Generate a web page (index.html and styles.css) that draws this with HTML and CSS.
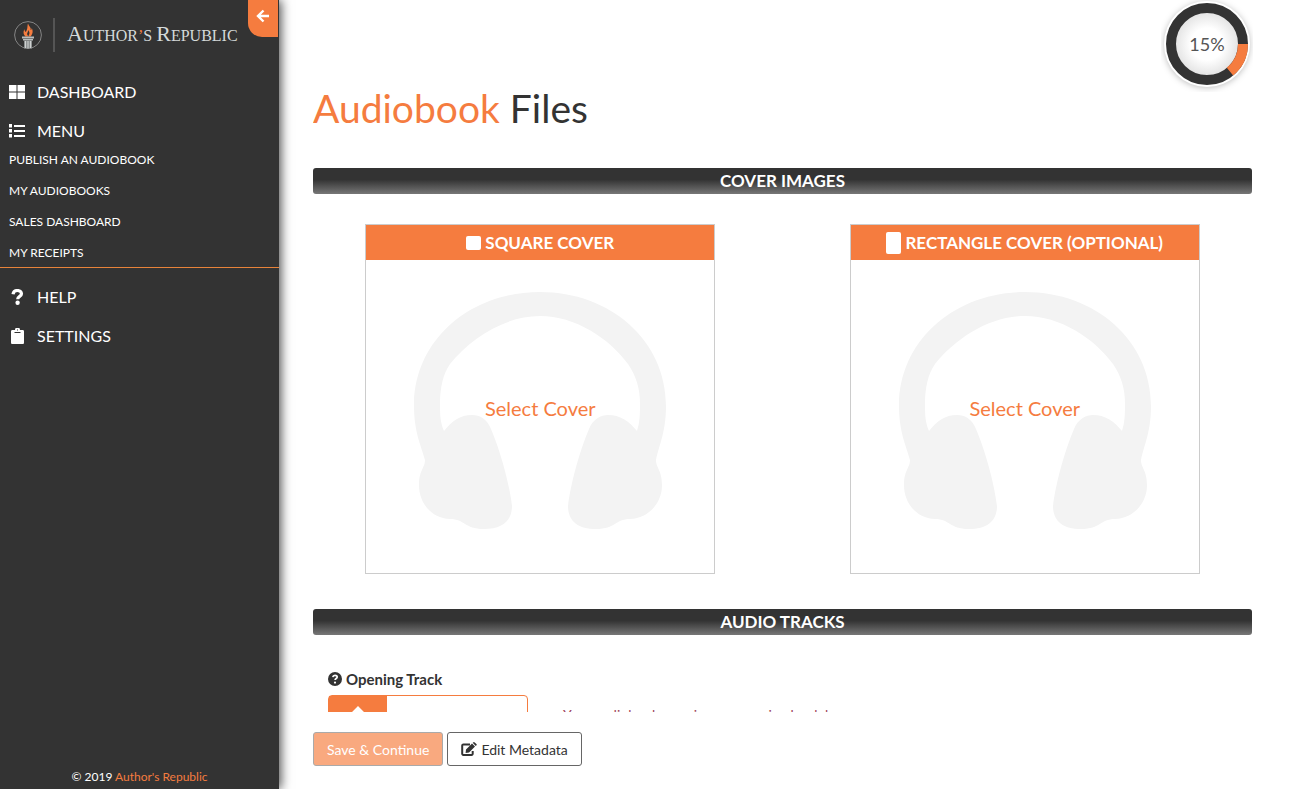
FILE: index.html
```html
<!DOCTYPE html>
<html lang="en">
<head>
<meta charset="utf-8">
<title>Audiobook Files - Author's Republic</title>
<link rel="stylesheet" href="styles.css">
</head>
<body>
<svg class="defs" aria-hidden="true">
  <symbol id="headphones" viewBox="0 0 252 237">
    <path d="M126 0C196 0 252 48 252 114C252 140 245 153 242 168C242 176 248 178 248 193C248 211 235 226 216 227C201 227 202 237 182 237C164 237 154 229 154 214C156 196 164 163 175 137C179 127 187 123 194 123C206 123 215 129 223 139C226 130 226 121 226 112C226 96 222 84 214 72C195 46 161 24 126 24C91 24 57 46 36 72C29 82 26 96 26 112C26 121 26 130 30 139C38 129 46 123 58 123C66 123 73 127 77 137C88 163 96 196 98 214C98 229 88 237 70 237C50 237 51 227 36 227C17 226 5 211 5 193C5 178 11 176 11 168C7 153 0 140 0 114C0 48 56 0 126 0Z"/>
  </symbol>
</svg>
<div class="app">
  <aside class="sidebar">
    <header class="brand">
      <svg class="brand-mark" viewBox="0 0 28 28" aria-hidden="true">
        <circle cx="14" cy="14" r="13.4" fill="none" stroke="#858585"/>
        <path d="M14 2.500c1 3 3.500 4 2.500 6.500 1 0 1.200-1 1.200-2 1.800 3.500.8 6.500-1.200 8.500h-5c-2-2-2.800-4.500-1-7.500 0 1 .2 2 1.200 3 2.300-3 1.300-5.500 2.300-8.500z" fill="#f57c3f"/>
        <path d="M14.500 9l1 3-1.200 3.500-1.300-2.500z" fill="#333"/>
        <path d="M8 15.500h12v2H8zM9 18h10v1.500H9z" fill="#b9bdbd"/>
        <path d="M10 19.500h8v8h-8z" fill="#8f9393"/>
        <path d="M11.500 20v7M14 20v7.500M16.500 20v7" stroke="#d0d3d3"/>
      </svg>
      <span class="brand-name"><span class="cap">A</span>UTHOR<span class="accent">’</span>S <span class="cap">R</span>EPUBLIC</span>
    </header>
    <button class="collapse" type="button" aria-label="Collapse menu">
      <svg viewBox="0 0 14 14" width="14" height="14" aria-hidden="true"><path d="M7.500 1.500L2 7l5.500 5.500M2.500 7H13" fill="none" stroke="#fff" stroke-width="2.400"/></svg>
    </button>
    <nav class="nav">
      <a class="nav-main" href="#"><svg class="icon" viewBox="0 0 16 16" aria-hidden="true"><path d="M0 1h7.500v6.500H0zM8.500 1H16v6.500H8.500zM0 8.500h7.500V15H0zM8.500 8.500H16V15H8.500z"/></svg>DASHBOARD</a>
      <a class="nav-main" href="#"><svg class="icon" viewBox="0 0 16 16" aria-hidden="true"><path d="M0 1h3v3.500H0zM5 2h11v2H5zM0 6h3v3.500H0zM5 7h11v2H5zM0 11h3v3.500H0zM5 12h11v2H5z"/></svg>MENU</a>
      <div class="subnav">
        <a href="#">PUBLISH AN AUDIOBOOK</a>
        <a href="#">MY AUDIOBOOKS</a>
        <a href="#">SALES DASHBOARD</a>
        <a href="#">MY RECEIPTS</a>
      </div>
      <a class="nav-main" href="#"><svg class="icon" viewBox="0 0 16 16" aria-hidden="true"><path d="M4 5.200C4.500 2.500 6 1.500 8.300 1.500c2.300 0 4.200 1.200 4.200 3.300 0 2.800-3.800 2.400-3.800 5.400" fill="none" stroke="#fff" stroke-width="3.200"/><circle cx="8.600" cy="13.800" r="2.200"/></svg>HELP</a>
      <a class="nav-main" href="#"><svg class="icon" viewBox="0 0 16 16" aria-hidden="true"><path d="M3.500 2H6a2.500 2.500 0 0 1 5 0h2.500c1 0 1.500.5 1.500 1.500v11c0 1-.5 1.500-1.500 1.500h-10C2.500 16 2 15.500 2 14.500v-11C2 2.500 2.500 2 3.500 2z"/><path d="M5.500 4.500h6M8 2h1" stroke="#333"/></svg>SETTINGS</a>
    </nav>
    <footer class="copyright">© 2019 <a href="#">Author's Republic</a></footer>
  </aside>
  <main class="main">
    <svg class="progress" viewBox="0 0 92 92" role="img" aria-label="15%">
      <defs><radialGradient id="dial"><stop offset=".5" stop-color="#fff"/><stop offset="1" stop-color="#e3e3e3"/></radialGradient></defs>
      <circle class="dial-rim" cx="46" cy="44" r="43"/>
      <circle cx="46" cy="44" r="32" fill="url(#dial)"/>
      <circle cx="46" cy="44" r="36" fill="none" stroke="#333" stroke-width="10"/>
      <path d="M82 44A36 36 0 0 1 69 71.700" fill="none" stroke="#f57c3f" stroke-width="10"/>
      <text x="46" y="51" text-anchor="middle">15%</text>
    </svg>
    <div class="scroller">
      <h1><span class="accent">Audiobook</span> Files</h1>
      <h2 class="bar">COVER IMAGES</h2>
      <div class="covers">
        <section class="cover">
          <h3><span class="shape"></span>SQUARE COVER</h3>
          <button class="cover-pick" type="button"><svg aria-hidden="true"><use href="#headphones"/></svg><span>Select Cover</span></button>
        </section>
        <section class="cover">
          <h3><span class="shape tall"></span>RECTANGLE COVER (OPTIONAL)</h3>
          <button class="cover-pick" type="button"><svg aria-hidden="true"><use href="#headphones"/></svg><span>Select Cover</span></button>
        </section>
      </div>
      <h2 class="bar">AUDIO TRACKS</h2>
      <section class="track">
        <h4><svg viewBox="0 0 14 14" width="14" height="14" aria-hidden="true"><circle cx="7" cy="7" r="7" fill="#333"/><path d="M4.800 5.200C5 3.800 6 3.400 7 3.400c1.200 0 2.200.6 2.200 1.700 0 1.600-2.100 1.300-2.100 3" fill="none" stroke="#fff" stroke-width="1.700"/><circle cx="7" cy="10.600" r="1.100" fill="#fff"/></svg>Opening Track</h4>
        <div class="track-row">
          <button class="upload" type="button" aria-label="Upload opening track"><span class="upload-icon"><svg viewBox="0 0 30 26" width="30" height="26" aria-hidden="true"><path d="M15 0L29 14H20V26H10V14H1z" fill="#fff"/></svg></span></button>
          <p>Your audiobook opening announcing book here</p>
        </div>
      </section>
    </div>
    <div class="actions">
      <button class="btn save" type="button" disabled>Save &amp; Continue</button>
      <button class="btn" type="button"><svg viewBox="0 0 16 14" width="16" height="14" aria-hidden="true"><path d="M9 2.500H2.500A1.200 1.200 0 0 0 1.200 3.700v8A1.200 1.200 0 0 0 2.500 13h8a1.200 1.200 0 0 0 1.200-1.300V9" fill="none" stroke="#333" stroke-width="2"/><path d="M5 7.500L11 1.500l3 3-6 6-3.400.4zM11.700.8l.8-.6q.6-.4 1.200.2l1.700 1.700q.6.600.1 1.200l-.8.7z" fill="#333"/></svg>Edit Metadata</button>
    </div>
  </main>
</div>
</body>
</html>
```
FILE: styles.css
```css
* { box-sizing: border-box; }
body { margin: 0; font-family: Lato, "Open Sans", sans-serif; font-size: 15px; color: #333; background: #fff; }
h1, h2, h3, h4, p { margin: 0; }
a { color: inherit; text-decoration: none; }
button { font: inherit; cursor: pointer; }
.defs { display: none; }
.accent { color: #f57c3f; }
.app { display: flex; height: 100vh; overflow: hidden; }

.sidebar { position: relative; flex: none; width: 279px; display: flex; flex-direction: column; background: #333; color: #fff; box-shadow: 2px 0 10px rgba(0, 0, 0, .7); }
.brand { display: flex; align-items: center; height: 70px; padding-left: 14px; }
.brand-mark { width: 28px; height: 28px; }
.brand-name { margin-left: 11px; padding-left: 12px; border-left: 2px solid #555; font: 16px/32px "Liberation Serif", serif; color: #d5dada; white-space: nowrap; }
.cap { font-size: 22px; }
.collapse { position: absolute; top: 0; right: 1px; width: 30px; height: 37px; padding: 0 0 10px; border: 0; border-bottom-left-radius: 14px; background: #f57c3f; }
.collapse svg { vertical-align: middle; }
.nav { padding-top: 2px; }
.nav-main { display: flex; align-items: center; gap: 12px; height: 39px; padding-left: 9px; font-size: 16px; }
.icon { width: 16px; height: 16px; fill: #fff; }
.subnav { display: flex; flex-direction: column; gap: 15px; margin-bottom: 9px; padding: 2px 9px 6px; border-bottom: 1px solid #e8833a; font-size: 12px; line-height: 16px; }
.copyright { margin-top: auto; padding: 0 0 4px; text-align: center; font-size: 12px; line-height: 16px; }
.copyright a { color: #f57c3f; }

.main { position: relative; flex: 1; display: flex; flex-direction: column; min-width: 0; padding: 0 38px 23px 34px; }
.progress { position: absolute; top: 0; right: 37px; width: 92px; height: 92px; }
.dial-rim { fill: #fff; filter: drop-shadow(0 1px 3px rgba(0, 0, 0, .25)); }
.progress text { font-size: 18px; fill: #555; }
.scroller { flex: 1; min-height: 0; padding-top: 83px; overflow: hidden; }
h1 { margin-bottom: 35px; font-size: 39px; line-height: 50px; font-weight: 400; }
.bar { border-radius: 3px; background: linear-gradient(#333 45%, #777); color: #fff; font-size: 17px; line-height: 26px; font-weight: 700; text-align: center; }
.covers { display: grid; grid-template-columns: 1fr 1fr; justify-items: center; margin: 0 -15px; padding: 30px 0 35px; }
.cover { display: flex; flex-direction: column; width: 350px; height: 350px; border: 1px solid #ccc; }
.cover h3 { display: flex; justify-content: center; align-items: center; gap: 4px; height: 35px; background: #f57c3f; color: #fff; font-size: 17px; font-weight: 700; }
.shape { width: 15px; height: 14px; border-radius: 2px; background: #fff; }
.tall { height: 22px; }
.cover-pick { flex: 1; display: grid; place-items: center; padding: 0 0 13px; border: 0; background: none; color: #f57c3f; font-size: 20px; }
.cover-pick > * { grid-area: 1 / 1; }
.cover-pick span { padding-bottom: 4px; }
.cover-pick svg { width: 252px; height: 237px; fill: #f3f3f3; }
.track { padding: 35px 15px 0; }
.track h4 { display: flex; align-items: center; gap: 4px; font-size: 15px; line-height: 18px; font-weight: 700; }
.track-row { display: flex; gap: 35px; margin-top: 7px; }
.upload { width: 200px; height: 60px; padding: 0; border: 1px solid #f57c3f; border-radius: 4px; background: #fff; }
.upload-icon { display: grid; place-items: start center; width: 58px; height: 58px; padding-top: 10px; background: #f57c3f; }
.track-row p { padding-top: 10px; font-size: 14px; line-height: 20px; color: #a0455a; }
.actions { display: flex; gap: 4px; padding-top: 20px; }
.btn { display: flex; align-items: center; gap: 4px; height: 34px; padding: 0 13px; border: 1px solid #666; border-radius: 3px; background: #fff; color: #333; font-size: 14px; }
.save { border-color: #aaa; background: #f9a97f; color: #fff; }
```
